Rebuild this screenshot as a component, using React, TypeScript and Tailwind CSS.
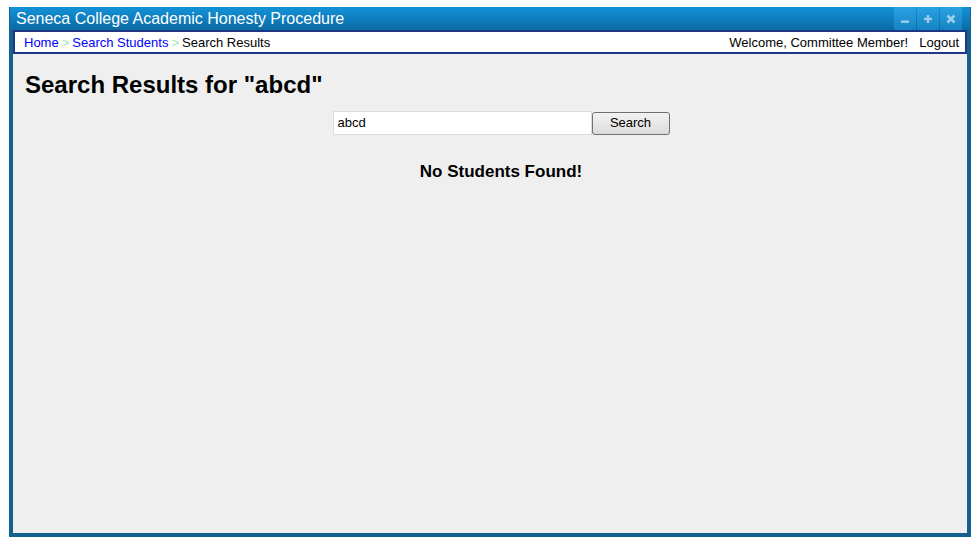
import React from "react";

export default function App() {
  return (
    <div className="w-[978px] h-[544px] bg-white pl-[9px] pt-[7px]" style={{ fontFamily: '"Liberation Sans", Arial, sans-serif' }}>
      <div className="w-[962px] h-[530px] flex flex-col">
        <div className="h-[23px] flex items-stretch bg-gradient-to-b from-[#1493d8] to-[#0a6aa4] border-x border-[#13618f]">
          <div className="flex-1 pl-[6px] text-white text-[16px] leading-[24px]">Seneca College Academic Honesty Procedure</div>
          <div className="flex items-stretch pr-[8px] gap-[1px]">
            <div className="w-[22px] bg-gradient-to-b from-[#2aa2e2] to-[#1683c2] flex items-center justify-center">
              <svg width="10" height="10" viewBox="0 0 10 10"><rect x="1" y="6.5" width="8" height="2.4" fill="#9ccfee" /></svg>
            </div>
            <div className="w-[22px] bg-gradient-to-b from-[#2aa2e2] to-[#1683c2] flex items-center justify-center">
              <svg width="10" height="10" viewBox="0 0 10 10"><rect x="1" y="3.8" width="8" height="2.4" fill="#9ccfee" /><rect x="3.8" y="1" width="2.4" height="8" fill="#9ccfee" /></svg>
            </div>
            <div className="w-[22px] bg-gradient-to-b from-[#2aa2e2] to-[#1683c2] flex items-center justify-center">
              <svg width="10" height="10" viewBox="0 0 10 10"><path d="M1.5 1.5 L8.5 8.5 M8.5 1.5 L1.5 8.5" stroke="#9ccfee" strokeWidth="2.6" /></svg>
            </div>
          </div>
        </div>
        <div className="flex-1 flex flex-col border-x-4 border-b-4 border-[#13618f] bg-[#efefef]">
          <div className="h-[24px] bg-white border-2 border-[#1d3784] flex items-center justify-between pl-[9px] pr-[6px] pt-[1px] text-[13px] text-black">
            <div className="flex items-center">
              <span className="text-[#0000ff]">Home</span>
              <span className="text-[#9ee6b8] px-[3px]">&gt;</span>
              <span className="text-[#0000ff]">Search Students</span>
              <span className="text-[#9ee6b8] px-[3px]">&gt;</span>
              <span>Search Results</span>
            </div>
            <div className="flex items-center gap-[11px]">
              <span>Welcome, Committee Member!</span>
              <span>Logout</span>
            </div>
          </div>
          <div className="flex flex-col pl-[12px] pt-[17px]">
            <h1 className="font-bold text-[24px] leading-[28px] text-black">Search Results for "abcd"</h1>
            <div className="flex flex-col items-center pl-[10px]">
              <div className="flex items-center mt-[12px]">
                <div className="w-[259px] h-[24px] bg-white border border-[#dcdcdc] flex items-center pl-[4px] text-[13px] text-black">abcd</div>
                <button className="w-[78px] h-[23px] rounded-[3px] border border-[#707070] bg-gradient-to-b from-[#f2f2f2] to-[#dcdcdc] text-[13px] text-black">Search</button>
              </div>
              <div className="mt-[24px] font-bold text-[17px] text-black">No Students Found!</div>
            </div>
          </div>
        </div>
      </div>
    </div>
  );
}
